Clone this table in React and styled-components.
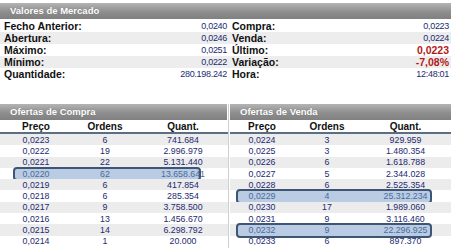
import styled, { createGlobalStyle } from 'styled-components';

const GlobalStyle = createGlobalStyle`
  body {
    margin: 0;
    background: #fff;
    font-family: "Liberation Sans", Arial, sans-serif;
  }
`;

const Page = styled.div`
  width: 457px;
  height: 248px;
  padding-top: 3px;
  box-sizing: border-box;
  overflow: hidden;
`;

const TitleBar = styled.div`
  height: 16px;
  line-height: 16px;
  padding-left: ${p => p.$pad || 10}px;
  background: linear-gradient(#b4b4b4, #8e8e8e 55%, #808080);
  color: #fff;
  font-size: 9.5px;
  font-weight: bold;
  text-shadow: 0 0 1px rgba(0, 0, 0, 0.25);
`;

const TopPanel = styled.div`
  width: 451px;
`;

const InfoRows = styled.div`
  padding-top: 1px;
`;

const InfoRow = styled.div`
  display: grid;
  grid-template-columns: 223px 217px;
  column-gap: 5px;
  height: 12px;
  padding-left: 4px;
  background: ${p => (p.$odd ? '#ededed' : '#fff')};
`;

const Pair = styled.div`
  display: flex;
  justify-content: space-between;
  align-items: center;
`;

const Label = styled.span`
  font-size: 10.5px;
  font-weight: bold;
  color: #111;
`;

const Value = styled.span`
  font-size: ${p => (p.$alert ? 10.5 : 9)}px;
  font-weight: ${p => (p.$alert ? 'bold' : 'normal')};
  letter-spacing: ${p => (p.$alert ? 0 : -0.3)}px;
  color: ${p => (p.$alert ? '#b21a1a' : '#1c2b72')};
`;

const Offers = styled.div`
  display: flex;
  margin-top: 24px;
`;

const OfferPanel = styled.div`
  width: ${p => p.$width}px;
  margin-left: ${p => p.$gap || 0}px;
  border-right: ${p => (p.$divider ? '1px solid #cfcfcf' : 'none')};
  height: 144px;
`;

const BarBox = styled.div`
  margin-right: ${p => p.$trim || 0}px;
`;

const OfferGrid = styled.div`
  display: grid;
  grid-template-columns: ${p => p.$cols};
  align-items: center;
  text-align: center;
  position: relative;
  isolation: isolate;
  height: ${p => (p.$head ? 12 : 11.3)}px;
  background: ${p => (p.$odd ? '#ececec' : 'transparent')};
  border-bottom: ${p => (p.$head ? '2px solid #5c6e82' : 'none')};
  font-size: ${p => (p.$head ? 10 : 8.8)}px;
  font-weight: ${p => (p.$head ? 'bold' : 'normal')};
  color: ${p => (p.$head ? '#111' : p.$sel ? '#4a6b9b' : '#1c2b72')};

  &::before {
    content: '';
    display: ${p => (p.$sel ? 'block' : 'none')};
    position: absolute;
    top: -1px;
    bottom: -2px;
    left: ${p => p.$hl[0]}px;
    right: ${p => p.$hl[1]}px;
    background: #b9cce3;
    border: 2px solid #3e5574;
    border-radius: 4px;
    z-index: -1;
  }
`;

const market = [
  ['Fecho Anterior:', '0,0240', 'Compra:', '0,0223'],
  ['Abertura:', '0,0246', 'Venda:', '0,0224'],
  ['Máximo:', '0,0251', 'Último:', '0,0223', true],
  ['Mínimo:', '0,0222', 'Variação:', '-7,08%', true],
  ['Quantidade:', '280.198.242', 'Hora:', '12:48:01'],
];

const buy = [
  ['0,0223', '6', '741.684'],
  ['0,0222', '19', '2.996.979'],
  ['0,0221', '22', '5.131.440'],
  ['0,0220', '62', '13.658.641', true],
  ['0,0219', '6', '417.854'],
  ['0,0218', '6', '285.354'],
  ['0,0217', '9', '3.758.500'],
  ['0,0216', '13', '1.456.670'],
  ['0,0215', '14', '6.298.792'],
  ['0,0214', '1', '20.000'],
];

const sell = [
  ['0,0224', '3', '929.959'],
  ['0,0225', '3', '1.480.354'],
  ['0,0226', '6', '1.618.788'],
  ['0,0227', '5', '2.344.028'],
  ['0,0228', '6', '2.525.354'],
  ['0,0229', '4', '25.312.234', true],
  ['0,0230', '17', '1.989.060'],
  ['0,0231', '9', '3.116.460'],
  ['0,0232', '9', '22.296.925', true],
  ['0,0233', '6', '897.370'],
];

const OfferTable = ({ title, rows, cols, hl, width, gap, divider, trim }) => (
  <OfferPanel $width={width} $gap={gap} $divider={divider}>
    <BarBox $trim={trim}>
      <TitleBar $pad={10}>{title}</TitleBar>
    </BarBox>
    <OfferGrid $head $cols={cols} $hl={hl}>
      <span>Preço</span>
      <span>Ordens</span>
      <span>Quant.</span>
    </OfferGrid>
    {rows.map(([price, orders, qty, sel], i) => (
      <OfferGrid key={price} $cols={cols} $hl={hl} $odd={i % 2 === 0} $sel={sel}>
        <span>{price}</span>
        <span>{orders}</span>
        <span>{qty}</span>
      </OfferGrid>
    ))}
  </OfferPanel>
);

const App = () => (
  <Page>
    <GlobalStyle />
    <TopPanel>
      <TitleBar>Valores de Mercado</TitleBar>
      <InfoRows>
        {market.map(([l1, v1, l2, v2, alert], i) => (
          <InfoRow key={l1} $odd={i % 2 === 1}>
            <Pair>
              <Label>{l1}</Label>
              <Value>{v1}</Value>
            </Pair>
            <Pair>
              <Label>{l2}</Label>
              <Value $alert={alert}>{v2}</Value>
            </Pair>
          </InfoRow>
        ))}
      </InfoRows>
    </TopPanel>
    <Offers>
      <OfferTable
        title="Ofertas de Compra"
        rows={buy}
        cols="72px 66px 1fr"
        hl={[13, 27]}
        width={228}
        divider
        trim={1}
      />
      <OfferTable
        title="Ofertas de Venda"
        rows={sell}
        cols="64px 66px 1fr"
        hl={[6, 19]}
        width={221}
        gap={1}
      />
    </Offers>
  </Page>
);

export default App;
